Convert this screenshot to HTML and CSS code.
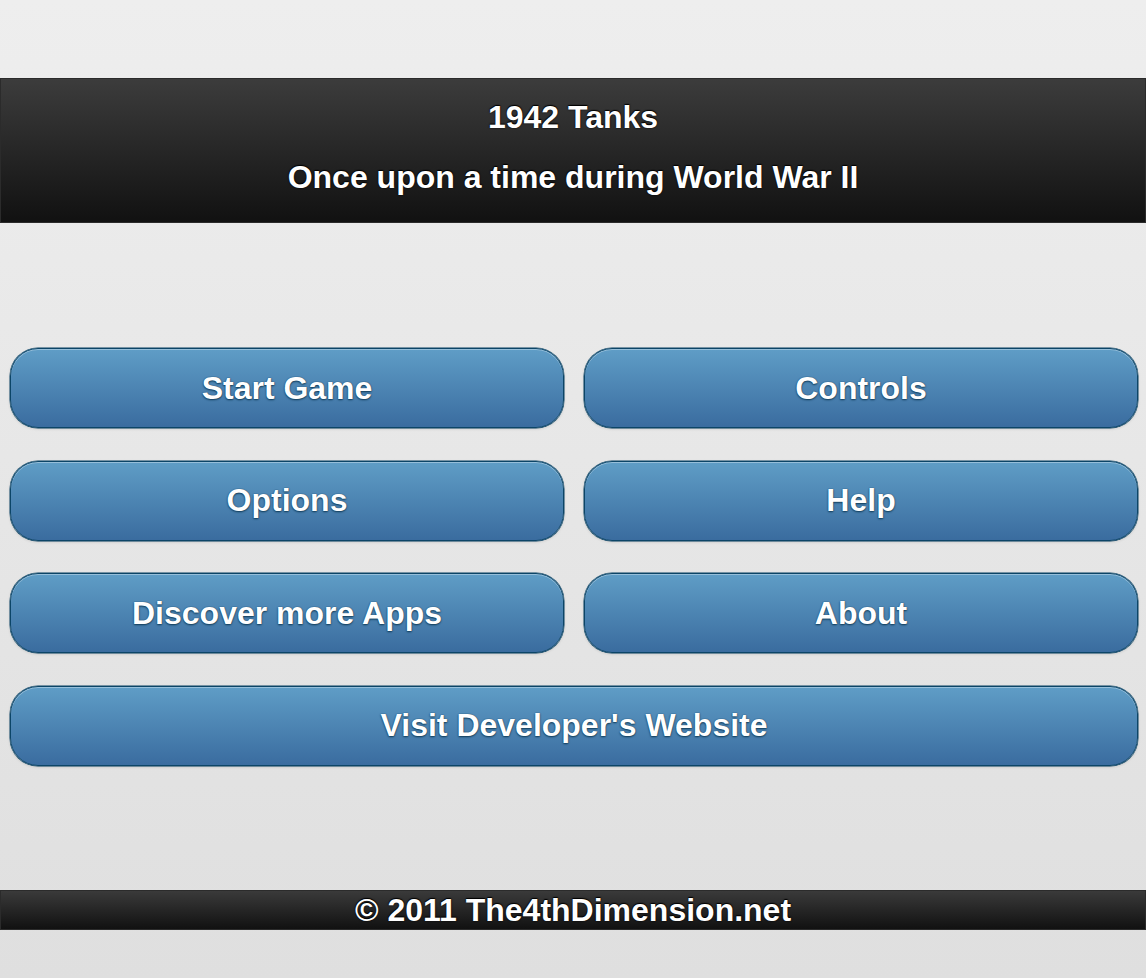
FILE: index.html
```html
<!DOCTYPE html>
<html lang="en">
<head>
<meta charset="utf-8">
<title>1942 Tanks</title>
<link rel="stylesheet" href="styles.css">
</head>
<body>
<div class="page">
  <header class="header">
    <div class="title">1942 Tanks</div>
    <div class="title">Once upon a time during World War II</div>
  </header>
  <main class="content">
    <div class="grid">
      <a class="btn" href="#">Start Game</a>
      <a class="btn" href="#">Controls</a>
      <a class="btn" href="#">Options</a>
      <a class="btn" href="#">Help</a>
      <a class="btn" href="#">Discover more Apps</a>
      <a class="btn" href="#">About</a>
      <a class="btn wide" href="#">Visit Developer's Website</a>
    </div>
  </main>
  <footer class="footer">© 2011 The4thDimension.net</footer>
</div>
</body>
</html>
```
FILE: styles.css
```css
html, body {
  margin: 0;
  padding: 0;
  height: 100%;
}
body {
  background: linear-gradient(#eeeeee, #dfdfdf);
  font-family: "Liberation Sans", Arial, Helvetica, sans-serif;
  font-weight: bold;
  color: #fff;
}
.page {
  display: flex;
  flex-direction: column;
  height: 978px;
  padding-top: 78px;
  box-sizing: border-box;
}
.header {
  border: 1px solid #2b2b2b;
  background: linear-gradient(#3c3c3c, #111111);
  padding: 8px 0 15px;
  text-align: center;
}
.title {
  font-size: 32px;
  line-height: 60px;
  text-shadow: 0 0 2px #000, 0 -1px 1px #000;
}
.content {
  padding: 125px 8px 0 10px;
  height: 542px;
}
.grid {
  display: grid;
  grid-template-columns: 1fr 1fr;
  column-gap: 20px;
  row-gap: 32.67px;
}
.btn {
  display: flex;
  align-items: center;
  justify-content: center;
  height: 78px;
  border: 1px solid #0c4567;
  border-radius: 28px;
  background: linear-gradient(#5f9dc6, #3a6c9f);
  box-shadow: inset 0 1px 0 rgba(255,255,255,0.35), 0 0 0 0.5px #0c4567, 0 1px 3px rgba(0,0,0,0.15);
  color: #fff;
  text-decoration: none;
  font-size: 32px;
  text-shadow: 0 1px 2px #0f3a56, 0 0 1px #0f3a56;
}
.wide {
  grid-column: 1 / span 2;
}
.footer {
  margin-top: auto;
  margin-bottom: 48px;
  border: 1px solid #2b2b2b;
  background: linear-gradient(#3a3a3a, #111111);
  height: 38px;
  line-height: 38px;
  text-align: center;
  font-size: 32px;
  text-shadow: 0 0 2px #000, 0 -1px 1px #000;
}
```
